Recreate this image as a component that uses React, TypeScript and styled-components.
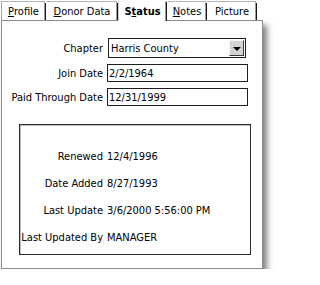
import React from 'react';
import styled, { createGlobalStyle } from 'styled-components';

const GlobalStyle = createGlobalStyle`
  html, body {
    margin: 0;
    padding: 0;
    background: #ffffff;
  }
  body {
    font-family: "DejaVu Sans Condensed", "Liberation Sans", Arial, sans-serif;
    font-size: 11px;
    color: #000;
  }
`;

const Frame = styled.div`
  width: 262px;
  margin-left: 1px;
`;

const TabStrip = styled.div`
  display: flex;
  height: 20px;
  align-items: flex-end;
  position: relative;
  z-index: 1;
`;

const Tab = styled.div<{ $w: number; $active?: boolean }>`
  box-sizing: border-box;
  width: ${(p) => p.$w}px;
  height: ${(p) => (p.$active ? 21 : 19)}px;
  margin-bottom: ${(p) => (p.$active ? -1 : 0)}px;
  display: flex;
  align-items: center;
  justify-content: center;
  padding-top: ${(p) => (p.$active ? 0 : 1)}px;
  background: #fff;
  border-top: 1px solid ${(p) => (p.$active ? '#ffffff' : '#b4b4b4')};
  border-left: 1px solid ${(p) => (p.$active ? '#c8c8c8' : 'transparent')};
  border-right: 1px solid #151515;
  box-shadow: inset -1px 0 0 #9c9c9c;
  font-weight: ${(p) => (p.$active ? 700 : 400)};
  position: relative;

  &::after {
    content: '';
    position: absolute;
    right: -1px;
    top: -1px;
    width: 1px;
    height: 2px;
    background: #fff;
  }

  &:first-child {
    border-left: 1px solid #a0a0a0;
  }

  u {
    text-decoration: underline;
    text-underline-offset: 1px;
  }
`;

const Panel = styled.div`
  box-sizing: border-box;
  height: 249px;
  border: 1px solid #8c8c8c;
  background: #fff;
  box-shadow: 4px 5px 6px rgba(0, 0, 0, 0.5);
  padding-top: 17px;
`;

const Form = styled.div`
  display: grid;
  grid-template-columns: 101px 141px;
  column-gap: 4px;
  row-gap: 6px;
  align-items: center;
`;

const Label = styled.div`
  text-align: right;
  white-space: nowrap;
`;

const TextBox = styled.div<{ $h?: number }>`
  box-sizing: border-box;
  height: ${(p) => p.$h ?? 18}px;
  border: 1px solid #1e1e1e;
  display: flex;
  align-items: center;
  padding-left: 1px;
  white-space: nowrap;
`;

const Combo = styled.div`
  box-sizing: border-box;
  height: 20px;
  width: 138px;
  margin-left: 1px;
  border: 1px solid #1e1e1e;
  display: flex;
  align-items: center;
  padding-left: 2px;
  position: relative;
`;

const ComboText = styled.span`
  flex: 1;
  white-space: nowrap;
`;

const DropButton = styled.div`
  box-sizing: border-box;
  width: 15px;
  height: 16px;
  margin-right: 1px;
  background-color: #d4d4d4;
  background-image: radial-gradient(#ececec 35%, transparent 36%);
  background-size: 2px 2px;
  border-right: 1px solid #3a3a3a;
  border-bottom: 1px solid #3a3a3a;
  border-top: 1px solid #f4f4f4;
  border-left: 1px solid #f4f4f4;
  display: flex;
  align-items: center;
  justify-content: center;
`;

const Arrow = styled.div`
  width: 0;
  height: 0;
  border-left: 4px solid transparent;
  border-right: 4px solid transparent;
  border-top: 4px solid #000;
  margin-top: 1px;
`;

const Group = styled.div`
  box-sizing: border-box;
  width: 232px;
  height: 131px;
  margin: 18px 0 0 17px;
  border: 1px solid #2c2c2c;
  box-shadow: inset 1px 1px 0 #bdbdbd;
  padding-top: 18px;
  display: grid;
  grid-template-columns: 83px 1fr;
  grid-auto-rows: 27px;
  column-gap: 4px;
  align-items: center;
`;

const Value = styled.div`
  white-space: nowrap;
`;

const tabs = [
  { w: 45, label: <><u>P</u>rofile</> },
  { w: 72, label: <><u>D</u>onor Data</> },
  { w: 49, label: <>S<u>t</u>atus</>, active: true },
  { w: 40, label: <><u>N</u>otes</> },
  { w: 50, label: <>Picture</> },
];

const details = [
  ['Renewed', '12/4/1996'],
  ['Date Added', '8/27/1993'],
  ['Last Update', '3/6/2000 5:56:00 PM'],
  ['Last Updated By', 'MANAGER'],
];

export default function App() {
  return (
    <>
      <GlobalStyle />
      <Frame>
        <TabStrip>
          {tabs.map((t, i) => (
            <Tab key={i} $w={t.w} $active={t.active}>
              {t.label}
            </Tab>
          ))}
        </TabStrip>
        <Panel>
          <Form>
            <Label>Chapter</Label>
            <Combo>
              <ComboText>Harris County</ComboText>
              <DropButton>
                <Arrow />
              </DropButton>
            </Combo>
            <Label>Join Date</Label>
            <TextBox>2/2/1964</TextBox>
            <Label>Paid Through Date</Label>
            <TextBox>12/31/1999</TextBox>
          </Form>
          <Group>
            {details.map(([k, v]) => (
              <React.Fragment key={k}>
                <Label>{k}</Label>
                <Value>{v}</Value>
              </React.Fragment>
            ))}
          </Group>
        </Panel>
      </Frame>
    </>
  );
}
